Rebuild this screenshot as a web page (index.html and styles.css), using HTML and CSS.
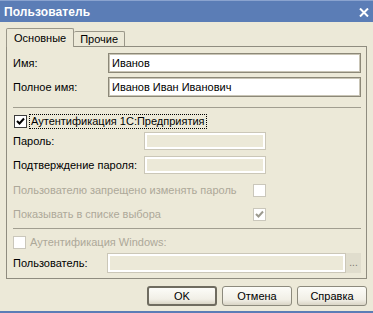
FILE: index.html
```html
<!DOCTYPE html>
<html lang="ru">
<head>
  <meta charset="UTF-8">
  <title>Пользователь</title>
  <link rel="stylesheet" href="styles.css">
</head>
<body>
  <div class="window">
    <!-- Заголовок окна -->
    <div class="titlebar">
      <span class="title">Пользователь</span>
      <svg class="close" width="10" height="9" viewBox="0 0 10 9">
        <path d="M1 0.5 L9 8.5 M9 0.5 L1 8.5" stroke="#fff" stroke-width="2"></path>
      </svg>
    </div>

    <div class="content">
      <!-- Вкладки -->
      <div class="tabs">
        <div class="tab active">Основные</div>
        <div class="tab">Прочие</div>
      </div>

      <div class="panel">
        <div class="row name-row">
          <span class="label">Имя:</span>
          <div class="field">Иванов</div>
        </div>
        <div class="row name-row second">
          <span class="label">Полное имя:</span>
          <div class="field">Иванов Иван Иванович</div>
        </div>

        <div class="sep"></div>

        <div class="check-row first">
          <span class="checkbox">
            <svg width="11" height="11" viewBox="0 0 11 11"><path d="M2 5 L4.5 7.5 L9 2.5" fill="none" stroke="#000" stroke-width="2"></path></svg>
          </span>
          <span class="focus">Аутентификация 1С:Предприятия</span>
        </div>

        <div class="row pass-row">
          <span class="label">Пароль:</span>
          <div class="field disabled"></div>
        </div>
        <div class="row pass-row second">
          <span class="label">Подтверждение пароля:</span>
          <div class="field disabled"></div>
        </div>

        <div class="opt-row">
          <span>Пользователю запрещено изменять пароль</span>
          <span class="checkbox disabled"></span>
        </div>
        <div class="opt-row">
          <span>Показывать в списке выбора</span>
          <span class="checkbox disabled">
            <svg width="11" height="11" viewBox="0 0 11 11"><path d="M2 5 L4.5 7.5 L9 2.5" fill="none" stroke="#9c9a8e" stroke-width="2"></path></svg>
          </span>
        </div>

        <div class="sep lower"></div>

        <div class="check-row muted">
          <span class="checkbox disabled"></span>
          <span>Аутентификация Windows:</span>
        </div>

        <div class="row user-row">
          <span class="label">Пользователь:</span>
          <div class="field disabled"></div>
          <div class="dots">...</div>
        </div>
      </div>

      <!-- Кнопки -->
      <div class="buttons">
        <button class="button default">OK</button>
        <button class="button">Отмена</button>
        <button class="button">Справка</button>
      </div>
    </div>
  </div>
</body>
</html>
```

FILE: styles.css
```css
/* Общие стили */
* {
  margin: 0;
  padding: 0;
  box-sizing: border-box;
}

body {
  background-color: #ece9d8;
  font-family: "Liberation Sans", Arial, sans-serif;
  font-size: 11px;
  color: #000;
}

.window {
  width: 373px;
  height: 313px;
  background-color: #ece9d8;
  border-bottom: 2px solid #5b7db6;
  display: flex;
  flex-direction: column;
}

/* Заголовок */
.titlebar {
  height: 22px;
  background-color: #5b7db6;
  border-top: 1px solid #8aa3cf;
  display: flex;
  align-items: center;
  justify-content: space-between;
  padding: 0 4px 0 4px;
}

.title {
  color: #fff;
  font-weight: bold;
  font-size: 12px;
  letter-spacing: 0.1px;
}

.close {
  margin-top: 1px;
}

.content {
  padding: 6px 6px 0 6px;
  flex: 1;
  display: flex;
  flex-direction: column;
}

/* Вкладки */
.tabs {
  display: flex;
  align-items: flex-end;
  height: 18px;
}

.tab {
  height: 15px;
  padding: 0 6px;
  border: 1px solid #9a9789;
  border-bottom: none;
  border-left: none;
  border-radius: 2px 2px 0 0;
  line-height: 14px;
}

.tab.active {
  height: 19px;
  margin-bottom: -1px;
  padding: 2px 7px 0 7px;
  border-left: 1px solid #9a9789;
  background-color: #ece9d8;
  position: relative;
  z-index: 1;
}

.panel {
  border: 1px solid #8f8c7f;
  height: 233px;
  padding: 0 5px 0 6px;
  display: flex;
  flex-direction: column;
}

/* Строки формы */
.row {
  display: flex;
  align-items: center;
}

.name-row {
  margin-top: 6px;
}

.name-row.second {
  margin-top: 4px;
}

.name-row .label {
  width: 95px;
}

.field {
  flex: 1;
  height: 20px;
  background-color: #fff;
  border: 1px solid #8c8878;
  box-shadow: inset 0 0 0 1px #c9c5b6;
  padding: 0 3px;
  line-height: 18px;
}

.field.disabled {
  background-color: #ece9d8;
  border-color: #cbc7b8;
  box-shadow: inset 0 0 0 2px #fff;
}

.pass-row {
  margin-top: 3px;
}

.pass-row.second {
  margin-top: 6px;
}

.pass-row .label {
  width: 131px;
}

.pass-row .field {
  flex: none;
  width: 122px;
  height: 18px;
}

.sep {
  margin-top: 10px;
  border-top: 1px solid #a19e90;
}

.sep.lower {
  margin-top: 6px;
}

.check-row {
  display: flex;
  align-items: center;
  height: 16px;
  margin-top: 5px;
}

.check-row.first {
  margin-left: 1px;
}

.checkbox {
  width: 13px;
  height: 13px;
  border: 1px solid #3c3c3c;
  background-color: #fff;
  display: flex;
  align-items: center;
  justify-content: center;
  margin-right: 2px;
}

.checkbox.disabled {
  border-color: #cac7bb;
}

.focus {
  border: 1px dotted #000;
  padding: 0 1px;
  line-height: 13px;
}

.muted,
.opt-row {
  color: #aca899;
}

.check-row.muted span:last-child {
  padding-left: 2px;
}

.opt-row {
  width: 253px;
  height: 16px;
  margin-top: 8px;
  display: flex;
  align-items: center;
  justify-content: space-between;
}

.opt-row .checkbox {
  margin-right: 0;
}

.user-row {
  margin-top: 3px;
}

.user-row .label {
  width: 94px;
}

.dots {
  width: 15px;
  height: 20px;
  background-color: #e0ddcd;
  color: #7a776b;
  text-align: center;
  line-height: 20px;
  font-size: 10px;
}

/* Кнопки */
.buttons {
  display: flex;
  justify-content: flex-end;
  gap: 5px;
  margin-top: 7px;
}

.button {
  width: 70px;
  height: 20px;
  font-family: "Liberation Sans", Arial, sans-serif;
  font-size: 11px;
  color: #000;
  border: 1px solid #8c8a7d;
  border-radius: 3px;
  background: linear-gradient(#fcfcf8, #f1efe6 70%, #d9d5c6);
}

.button.default {
  border: 2px solid #6f6c60;
}
```
